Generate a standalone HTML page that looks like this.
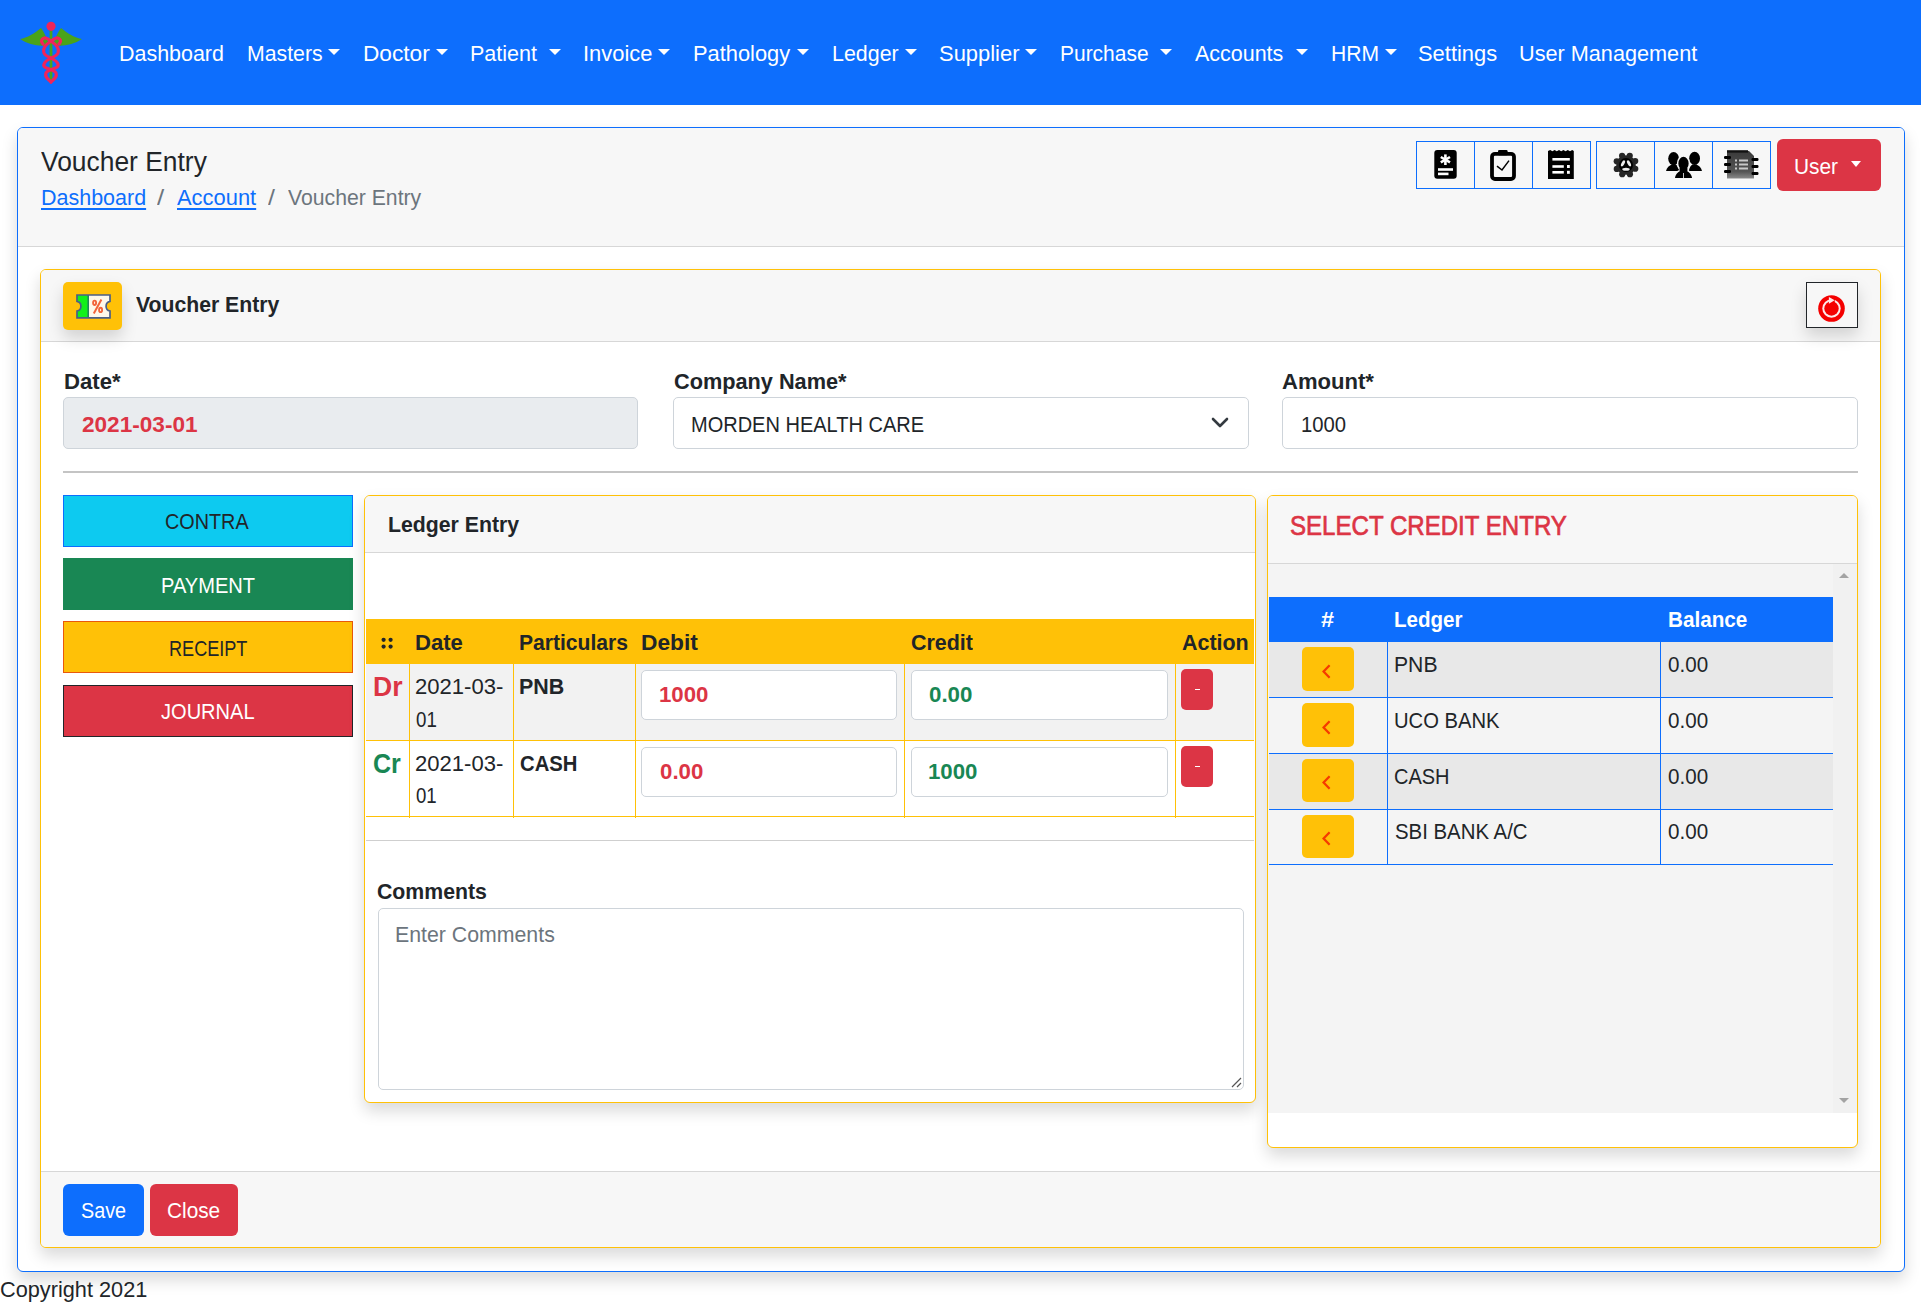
<!DOCTYPE html>
<html><head><meta charset="utf-8"><style>
html,body{margin:0;padding:0;background:#fff;width:1921px;height:1304px;overflow:hidden;position:relative;font-family:"Liberation Sans", sans-serif;}
</style></head><body>
<div style="position:absolute;left:0px;top:0px;width:1921px;height:105px;box-sizing:border-box;background:#0d6efd;"></div>
<svg style="position:absolute;left:18px;top:20px" width="66" height="66" viewBox="0 0 66 66">
<path d="M2 19 C9 18 17 13 23 8 C27 13 29 19 31 25 C22 27 11 25 2 19Z" fill="#4aa31a"/>
<path d="M64 19 C57 18 49 13 43 8 C39 13 37 19 35 25 C44 27 55 25 64 19Z" fill="#4aa31a"/>
<rect x="31.6" y="8" width="2.8" height="54" fill="#4aa31a"/>
<circle cx="33" cy="6.3" r="4.6" fill="#f0245a"/>
<g fill="none" stroke="#f0245a" stroke-width="3.2" stroke-linecap="round">
<path d="M25 24 C21 20 26 16 30 19 C36 23 42 27 40 33 C38 38 28 38 26 44 C24 49 36 49 38 53 C40 58 34 60 33 62"/>
<path d="M41 24 C45 20 40 16 36 19 C30 23 24 27 26 33 C28 38 38 38 40 44 C42 49 30 49 28 53 C26 58 32 60 33 62"/>
</g>
</svg>
<div style="position:absolute;left:328.2px;top:48.7px;width:0;height:0;border-left:6.30px solid transparent;border-right:6.30px solid transparent;border-top:6.4px solid #fff"></div>
<div style="position:absolute;left:435.5px;top:48.7px;width:0;height:0;border-left:6.25px solid transparent;border-right:6.25px solid transparent;border-top:6.4px solid #fff"></div>
<div style="position:absolute;left:548.5px;top:48.7px;width:0;height:0;border-left:6.25px solid transparent;border-right:6.25px solid transparent;border-top:6.4px solid #fff"></div>
<div style="position:absolute;left:658px;top:48.7px;width:0;height:0;border-left:6.25px solid transparent;border-right:6.25px solid transparent;border-top:6.4px solid #fff"></div>
<div style="position:absolute;left:797px;top:48.7px;width:0;height:0;border-left:6.50px solid transparent;border-right:6.50px solid transparent;border-top:6.4px solid #fff"></div>
<div style="position:absolute;left:905px;top:48.7px;width:0;height:0;border-left:6.25px solid transparent;border-right:6.25px solid transparent;border-top:6.4px solid #fff"></div>
<div style="position:absolute;left:1025px;top:48.7px;width:0;height:0;border-left:6.50px solid transparent;border-right:6.50px solid transparent;border-top:6.4px solid #fff"></div>
<div style="position:absolute;left:1159.7px;top:48.7px;width:0;height:0;border-left:6.15px solid transparent;border-right:6.15px solid transparent;border-top:6.4px solid #fff"></div>
<div style="position:absolute;left:1295.6px;top:48.7px;width:0;height:0;border-left:6.25px solid transparent;border-right:6.25px solid transparent;border-top:6.4px solid #fff"></div>
<div style="position:absolute;left:1385px;top:48.7px;width:0;height:0;border-left:6.25px solid transparent;border-right:6.25px solid transparent;border-top:6.4px solid #fff"></div>
<div style="position:absolute;left:17px;top:127px;width:1888px;height:1145px;box-sizing:border-box;border:1px solid #0d6efd;border-radius:6px;background:#fff;overflow:hidden;box-shadow:0 8px 16px rgba(0,0,0,.15);"><div style="position:absolute;left:0;top:0;right:0;height:118px;background:#f7f7f7;border-bottom:1px solid rgba(0,0,0,.13)"></div></div>
<div style="position:absolute;left:1416px;top:141px;width:174.5px;height:47.5px;box-sizing:border-box;border:1px solid #0d6efd;"><div style="position:absolute;left:56.80px;top:0;width:1px;height:100%;background:#0d6efd"></div><div style="position:absolute;left:114.70px;top:0;width:1px;height:100%;background:#0d6efd"></div></div>
<div style="position:absolute;left:1596px;top:141px;width:174.5px;height:47.5px;box-sizing:border-box;border:1px solid #0d6efd;"><div style="position:absolute;left:57.30px;top:0;width:1px;height:100%;background:#0d6efd"></div><div style="position:absolute;left:115.40px;top:0;width:1px;height:100%;background:#0d6efd"></div></div>
<div style="position:absolute;left:1777px;top:139px;width:103.5px;height:51.5px;box-sizing:border-box;background:#dc3545;border-radius:6px;"></div>
<div style="position:absolute;left:1850.8px;top:161.2px;width:0;height:0;border-left:5.8px solid transparent;border-right:5.8px solid transparent;border-top:6.2px solid #fff"></div>
<div style="position:absolute;left:40px;top:269px;width:1841px;height:979px;box-sizing:border-box;border:1px solid #ffc107;border-radius:6px;background:#fff;overflow:hidden;box-shadow:0 8px 16px rgba(0,0,0,.15);"><div style="position:absolute;left:0;top:0;right:0;height:71px;background:#f7f7f7;border-bottom:1px solid rgba(0,0,0,.13)"></div><div style="position:absolute;left:0;bottom:0;right:0;height:75px;background:#f7f7f7;border-top:1px solid rgba(0,0,0,.13)"></div></div>
<div style="position:absolute;left:63px;top:282px;width:59px;height:48px;box-sizing:border-box;background:#ffc107;border-radius:5px;box-shadow:0 8px 16px rgba(0,0,0,.15);"></div>
<div style="position:absolute;left:1806.4px;top:281.9px;width:51.59999999999991px;height:46.60000000000002px;box-sizing:border-box;border:1.5px solid #212529;background:#f7f7f7;box-shadow:0 8px 16px rgba(0,0,0,.15);"></div>
<div style="position:absolute;left:63.3px;top:397.2px;width:575.2px;height:51.60000000000002px;box-sizing:border-box;background:#e9ecef;border:1px solid #ced4da;border-radius:5px;"></div>
<div style="position:absolute;left:672.5px;top:397.2px;width:576.0px;height:51.60000000000002px;box-sizing:border-box;background:#fff;border:1px solid #ced4da;border-radius:5px;"></div>
<div style="position:absolute;left:1282.3px;top:397.2px;width:575.5px;height:51.60000000000002px;box-sizing:border-box;background:#fff;border:1px solid #ced4da;border-radius:5px;"></div>
<svg style="position:absolute;left:1210px;top:414px" width="20" height="16" viewBox="0 0 20 16"><path d="M3 5 L10 12 L17 5" fill="none" stroke="#343a40" stroke-width="2.6" stroke-linecap="round" stroke-linejoin="round"/></svg>
<div style="position:absolute;left:63px;top:471px;width:1795px;height:2px;box-sizing:border-box;background:#c4c4c4;"></div>
<div style="position:absolute;left:63.2px;top:495.2px;width:289.7px;height:51.599999999999966px;box-sizing:border-box;background:#0dcaf0;border:1px solid #0d6efd;"></div>
<div style="position:absolute;left:63.2px;top:558.4px;width:289.7px;height:51.39999999999998px;box-sizing:border-box;background:#198754;border:1px solid #198754;"></div>
<div style="position:absolute;left:63.2px;top:621.3px;width:289.7px;height:52.200000000000045px;box-sizing:border-box;background:#ffc107;border:1px solid #e8590c;"></div>
<div style="position:absolute;left:63.2px;top:685.1px;width:289.7px;height:51.799999999999955px;box-sizing:border-box;background:#dc3545;border:1px solid #212529;"></div>
<div style="position:absolute;left:364.3px;top:495.3px;width:891.3px;height:608.2px;box-sizing:border-box;border:1px solid #ffc107;border-radius:6px;background:#fff;overflow:hidden;box-shadow:0 8px 16px rgba(0,0,0,.15);"><div style="position:absolute;left:0;top:0;right:0;height:56px;background:#f7f7f7;border-bottom:1px solid rgba(0,0,0,.13)"></div></div>
<div style="position:absolute;left:365.5px;top:619.1px;width:888.9000000000001px;height:44.89999999999998px;box-sizing:border-box;background:#ffc107;"></div>
<div style="position:absolute;left:365.5px;top:664px;width:888.9000000000001px;height:76.5px;box-sizing:border-box;background:#f2f2f2;"></div>
<div style="position:absolute;left:409px;top:664px;width:1px;height:153.5px;box-sizing:border-box;background:#ffc107;"></div>
<div style="position:absolute;left:513px;top:664px;width:1px;height:153.5px;box-sizing:border-box;background:#ffc107;"></div>
<div style="position:absolute;left:635px;top:664px;width:1px;height:153.5px;box-sizing:border-box;background:#ffc107;"></div>
<div style="position:absolute;left:904px;top:664px;width:1px;height:153.5px;box-sizing:border-box;background:#ffc107;"></div>
<div style="position:absolute;left:1175px;top:664px;width:1px;height:153.5px;box-sizing:border-box;background:#ffc107;"></div>
<div style="position:absolute;left:365.5px;top:740px;width:888.9000000000001px;height:1px;box-sizing:border-box;background:#ffc107;"></div>
<div style="position:absolute;left:365.5px;top:816px;width:888.9000000000001px;height:1px;box-sizing:border-box;background:#ffc107;"></div>
<div style="position:absolute;left:366px;top:839.5px;width:888.4000000000001px;height:1.2999999999999545px;box-sizing:border-box;background:#cfcfcf;"></div>
<svg style="position:absolute;left:381px;top:637px" width="13" height="13" viewBox="0 0 13 13"><g fill="#212529"><circle cx="2.6" cy="2.8" r="2.1"/><circle cx="9.6" cy="2.8" r="2.1"/><circle cx="2.6" cy="9.6" r="2.1"/><circle cx="9.6" cy="9.6" r="2.1"/></g></svg>
<div style="position:absolute;left:641.4px;top:669.9px;width:255.80000000000007px;height:50.5px;box-sizing:border-box;background:#fff;border:1px solid #ced4da;border-radius:5px;"></div>
<div style="position:absolute;left:910.8px;top:669.9px;width:257.70000000000005px;height:50.5px;box-sizing:border-box;background:#fff;border:1px solid #ced4da;border-radius:5px;"></div>
<div style="position:absolute;left:1181.3px;top:669.3px;width:31.90000000000009px;height:40.700000000000045px;box-sizing:border-box;background:#dc3545;border-radius:5px;"></div>
<div style="position:absolute;left:1194.5px;top:689px;width:5.5px;height:1.2000000000000455px;box-sizing:border-box;background:#fff;"></div>
<div style="position:absolute;left:641.4px;top:746.7px;width:255.80000000000007px;height:50.799999999999955px;box-sizing:border-box;background:#fff;border:1px solid #ced4da;border-radius:5px;"></div>
<div style="position:absolute;left:910.8px;top:746.7px;width:257.70000000000005px;height:50.799999999999955px;box-sizing:border-box;background:#fff;border:1px solid #ced4da;border-radius:5px;"></div>
<div style="position:absolute;left:1181.3px;top:746.3px;width:31.90000000000009px;height:40.5px;box-sizing:border-box;background:#dc3545;border-radius:5px;"></div>
<div style="position:absolute;left:1194.5px;top:766px;width:5.5px;height:1.2000000000000455px;box-sizing:border-box;background:#fff;"></div>
<div style="position:absolute;left:377.7px;top:907.6px;width:866.3px;height:182.89999999999998px;box-sizing:border-box;background:#fff;border:1px solid #ced4da;border-radius:5px;"></div>
<svg style="position:absolute;left:1230px;top:1076px" width="12" height="12" viewBox="0 0 12 12"><path d="M11 2 L2 11 M11 7 L7 11" stroke="#555" stroke-width="1.2"/></svg>
<div style="position:absolute;left:1267.3px;top:495.3px;width:590.5px;height:653.2px;box-sizing:border-box;border:1px solid #ffc107;border-radius:6px;background:#fff;overflow:hidden;box-shadow:0 8px 16px rgba(0,0,0,.15);"><div style="position:absolute;left:0;top:0;right:0;height:67px;background:#f7f7f7;border-bottom:1px solid rgba(0,0,0,.13)"></div><div style="position:absolute;left:0;top:68px;right:0;height:549px;background:#f4f4f4"></div><div style="position:absolute;left:565px;top:68px;width:24px;height:549px;background:#f1f1f1"></div></div>
<div style="position:absolute;left:1839px;top:573px;width:0;height:0;border-left:5.4px solid transparent;border-right:5.4px solid transparent;border-bottom:5.8px solid #a3a3a3"></div>
<div style="position:absolute;left:1839px;top:1098px;width:0;height:0;border-left:5.4px solid transparent;border-right:5.4px solid transparent;border-top:5.8px solid #a3a3a3"></div>
<div style="position:absolute;left:1268.5px;top:597.2px;width:564.5px;height:44.59999999999991px;box-sizing:border-box;background:#0d6efd;"></div>
<div style="position:absolute;left:1268.5px;top:641.8px;width:564.5px;height:55.799999999999955px;box-sizing:border-box;background:#e8e8e8;"></div>
<div style="position:absolute;left:1268.5px;top:753.4px;width:564.5px;height:55.799999999999955px;box-sizing:border-box;background:#e8e8e8;"></div>
<div style="position:absolute;left:1268.5px;top:697px;width:564.5px;height:1px;box-sizing:border-box;background:#0d6efd;"></div>
<div style="position:absolute;left:1302.3px;top:647.0999999999999px;width:51.700000000000045px;height:43.700000000000045px;box-sizing:border-box;background:#ffc107;border-radius:5px;"></div>
<svg style="position:absolute;left:1320px;top:662.8px" width="13" height="17" viewBox="0 0 13 17"><path d="M9.6 2.2 L3.6 8.5 L9.6 14.8" fill="none" stroke="#f53b00" stroke-width="2.3"/></svg>
<div style="position:absolute;left:1268.5px;top:753px;width:564.5px;height:1px;box-sizing:border-box;background:#0d6efd;"></div>
<div style="position:absolute;left:1302.3px;top:702.9px;width:51.700000000000045px;height:43.700000000000045px;box-sizing:border-box;background:#ffc107;border-radius:5px;"></div>
<svg style="position:absolute;left:1320px;top:718.6px" width="13" height="17" viewBox="0 0 13 17"><path d="M9.6 2.2 L3.6 8.5 L9.6 14.8" fill="none" stroke="#f53b00" stroke-width="2.3"/></svg>
<div style="position:absolute;left:1268.5px;top:809px;width:564.5px;height:1px;box-sizing:border-box;background:#0d6efd;"></div>
<div style="position:absolute;left:1302.3px;top:758.6999999999999px;width:51.700000000000045px;height:43.700000000000045px;box-sizing:border-box;background:#ffc107;border-radius:5px;"></div>
<svg style="position:absolute;left:1320px;top:774.4px" width="13" height="17" viewBox="0 0 13 17"><path d="M9.6 2.2 L3.6 8.5 L9.6 14.8" fill="none" stroke="#f53b00" stroke-width="2.3"/></svg>
<div style="position:absolute;left:1268.5px;top:864px;width:564.5px;height:1px;box-sizing:border-box;background:#0d6efd;"></div>
<div style="position:absolute;left:1302.3px;top:814.5px;width:51.700000000000045px;height:43.700000000000045px;box-sizing:border-box;background:#ffc107;border-radius:5px;"></div>
<svg style="position:absolute;left:1320px;top:830.2px" width="13" height="17" viewBox="0 0 13 17"><path d="M9.6 2.2 L3.6 8.5 L9.6 14.8" fill="none" stroke="#f53b00" stroke-width="2.3"/></svg>
<div style="position:absolute;left:1387px;top:641.8px;width:1px;height:223.20000000000005px;box-sizing:border-box;background:#0d6efd;"></div>
<div style="position:absolute;left:1660px;top:641.8px;width:1px;height:223.20000000000005px;box-sizing:border-box;background:#0d6efd;"></div>
<div style="position:absolute;left:62.9px;top:1184.1px;width:80.9px;height:51.80000000000018px;box-sizing:border-box;background:#0d6efd;border-radius:6px;"></div>
<div style="position:absolute;left:150.2px;top:1184.1px;width:87.70000000000002px;height:51.80000000000018px;box-sizing:border-box;background:#dc3545;border-radius:6px;"></div>
<svg style="position:absolute;left:1433.5px;top:150.3px" width="23" height="29" viewBox="0 0 23 29">
<rect x="0.3" y="0" width="22.4" height="28.8" rx="3" fill="#000"/>
<g stroke="#fff" stroke-width="2.6" stroke-linecap="butt"><path d="M11.4 4.4 V15"/><path d="M6.8 7 L16 12.4"/><path d="M6.8 12.4 L16 7"/></g>
<rect x="4" y="18.2" width="15" height="2.6" fill="#fff"/><rect x="4" y="22.6" width="10.5" height="2.6" fill="#fff"/>
</svg>
<svg style="position:absolute;left:1490px;top:149.5px" width="26" height="31" viewBox="0 0 26 31">
<rect x="2" y="3.8" width="22" height="25.2" rx="3" fill="none" stroke="#000" stroke-width="3.8"/>
<rect x="8" y="0" width="9.6" height="5.2" rx="1.2" fill="#000"/>
<path d="M7 16.2 L12 20 L19 10.6" fill="none" stroke="#000" stroke-width="1.5"/>
</svg>
<svg style="position:absolute;left:1548px;top:150px" width="26" height="29" viewBox="0 0 26 29">
<path d="M0 1 L2.2 0 L4.4 1.2 L6.6 0 L8.8 1.2 L11 0 L13.2 1.2 L15.4 0 L17.6 1.2 L19.8 0 L22 1.2 L24.2 0 L25.8 1 V29 H0 Z" fill="#000"/>
<rect x="4.4" y="8" width="17.4" height="2.6" fill="#fff"/>
<rect x="4.4" y="15.2" width="11.4" height="2.6" fill="#fff"/><rect x="19" y="15" width="2.8" height="3" fill="#fff"/>
<rect x="4.4" y="21" width="11.4" height="2.6" fill="#fff"/><rect x="19" y="20.8" width="2.8" height="3" fill="#fff"/>
</svg>
<svg style="position:absolute;left:1612px;top:150.7px" width="28" height="28" viewBox="-14 -14 28 28">
<g fill="#262626"><circle r="9.8"/><circle cx="9.27" cy="3.75" r="3.1"/><circle cx="3.91" cy="9.21" r="3.1"/><circle cx="-3.75" cy="9.27" r="3.1"/><circle cx="-9.21" cy="3.91" r="3.1"/><circle cx="-9.27" cy="-3.75" r="3.1"/><circle cx="-3.91" cy="-9.21" r="3.1"/><circle cx="3.75" cy="-9.27" r="3.1"/><circle cx="9.21" cy="-3.91" r="3.1"/></g>
<circle r="7" fill="#000"/>
<ellipse cx="-3" cy="-1.6" rx="1.5" ry="3.3" transform="rotate(28 -3 -1.6)" fill="#ececec"/>
<ellipse cx="3" cy="-1.6" rx="1.5" ry="3.3" transform="rotate(-28 3 -1.6)" fill="#ececec"/>
<ellipse cx="0" cy="4.3" rx="3.7" ry="1.5" fill="#ececec"/>
</svg>
<svg style="position:absolute;left:1662px;top:146px" width="44" height="36" viewBox="0 0 44 36">
<g fill="#000">
<ellipse cx="11.6" cy="12.6" rx="5.4" ry="6.6"/><path d="M4 25 C4.6 21.5 7.5 19.2 9.8 18.4 L13.6 18.4 C15.6 19.4 16.8 22 17.2 25 Z"/>
<ellipse cx="32.6" cy="12.4" rx="5.4" ry="6.6"/><path d="M26.8 25 C27.2 22 28.6 19.4 30.6 18.4 L34.4 18.4 C36.7 19.2 39.4 21.5 40 25 Z"/>
</g>
<g fill="#000" stroke="#f7f7f7" stroke-width="1.5">
<path d="M12 32.8 C12.6 28 15.6 25 18.6 24.2 L24.4 24.2 C27.4 25 30.4 28 31 32.8 Z"/>
<ellipse cx="21.5" cy="17.4" rx="5.9" ry="7.4"/>
</g>
<rect x="17.6" y="22" width="7.8" height="4" fill="#000"/>
<rect x="21.1" y="27" width="0.8" height="6" fill="#f7f7f7"/>
</svg>
<svg style="position:absolute;left:1724px;top:149.5px" width="35" height="29" viewBox="0 0 35 29">
<defs><linearGradient id="nb" x1="0" y1="0" x2="0" y2="1"><stop offset="0" stop-color="#3a3a3a"/><stop offset="0.75" stop-color="#555"/><stop offset="1" stop-color="#8a8a8a"/></linearGradient></defs>
<path d="M3 1 H25 L30 6 V28.5 H3 Z" fill="url(#nb)"/>
<rect x="3" y="0.2" width="21" height="2.4" fill="#111"/>
<g fill="#000"><rect x="0" y="6" width="7" height="3" rx="1.2"/><rect x="0" y="13" width="7" height="3" rx="1.2"/><rect x="0" y="20" width="7" height="3" rx="1.2"/>
<rect x="27.5" y="8" width="7" height="3" rx="1.2"/><rect x="27.5" y="15" width="7" height="3" rx="1.2"/><rect x="27.5" y="22" width="7" height="3" rx="1.2"/></g>
<g fill="#c8c8c8"><rect x="11" y="9.5" width="2" height="2"/><rect x="15" y="9.5" width="9" height="2"/><rect x="11" y="13.5" width="2" height="2"/><rect x="15" y="13.5" width="9" height="2"/><rect x="11" y="17.5" width="2" height="2"/><rect x="15" y="17.5" width="9" height="2"/></g>
</svg>
<svg style="position:absolute;left:75.5px;top:293.5px" width="35" height="25" viewBox="0 0 35 25">
<defs><clipPath id="tk"><path d="M1 1 H34 V7.4 A4.9 4.9 0 0 0 34 17 V23.8 H1 V17 A4.9 4.9 0 0 0 1 7.4 Z"/></clipPath></defs>
<g clip-path="url(#tk)"><rect width="35" height="25" fill="#fdf8ea"/><rect width="13" height="25" fill="#12f01a"/><rect x="11.4" width="1.6" height="25" fill="#1e8a5a"/></g>
<path d="M1 1 H34 V7.4 A4.9 4.9 0 0 0 34 17 V23.8 H1 V17 A4.9 4.9 0 0 0 1 7.4 Z" fill="none" stroke="#4b5f86" stroke-width="1.7"/>
<g fill="none" stroke="#f2643a" stroke-width="1.9"><ellipse cx="18.6" cy="8.8" rx="1.5" ry="2.2"/><ellipse cx="24.6" cy="15.9" rx="1.5" ry="2.2"/></g>
<path d="M25.4 5.6 L17.8 19.6" stroke="#f2643a" stroke-width="2"/>
</svg>
<svg style="position:absolute;left:1817px;top:293.5px" width="29" height="29" viewBox="-14.5 -14.5 29 29">
<circle r="13.3" fill="#f40000"/>
<circle r="9.2" fill="#fde8e8"/>
<circle r="7.2" fill="#f40000"/>
<path d="M3.6 -9.6 A9.6 9.6 0 0 0 -2.5 -9.3 L-1 -5 A5 5 0 0 1 3 -5.5 Z" fill="#f40000"/>
<path d="M-2.6 -11.6 L3.2 -8.2 L-2.6 -4.8 Z" fill="#fde8e8"/>
</svg>
<div style="position:absolute;left:118.74px;top:42.73px;font-size:22.4px;line-height:22.4px;font-weight:400;color:#fff;white-space:nowrap;transform-origin:0 0;transform:scaleX(0.9576);">Dashboard</div>
<div style="position:absolute;left:247.05px;top:42.73px;font-size:22.4px;line-height:22.4px;font-weight:400;color:#fff;white-space:nowrap;transform-origin:0 0;transform:scaleX(0.9499);">Masters</div>
<div style="position:absolute;left:362.69px;top:42.73px;font-size:22.4px;line-height:22.4px;font-weight:400;color:#fff;white-space:nowrap;transform-origin:0 0;transform:scaleX(1.0124);">Doctor</div>
<div style="position:absolute;left:469.84px;top:42.73px;font-size:22.4px;line-height:22.4px;font-weight:400;color:#fff;white-space:nowrap;transform-origin:0 0;transform:scaleX(0.9599);">Patient</div>
<div style="position:absolute;left:583.04px;top:42.73px;font-size:22.4px;line-height:22.4px;font-weight:400;color:#fff;white-space:nowrap;transform-origin:0 0;transform:scaleX(0.9782);">Invoice</div>
<div style="position:absolute;left:693.02px;top:42.73px;font-size:22.4px;line-height:22.4px;font-weight:400;color:#fff;white-space:nowrap;transform-origin:0 0;transform:scaleX(0.9759);">Pathology</div>
<div style="position:absolute;left:831.54px;top:42.73px;font-size:22.4px;line-height:22.4px;font-weight:400;color:#fff;white-space:nowrap;transform-origin:0 0;transform:scaleX(0.9565);">Ledger</div>
<div style="position:absolute;left:939.02px;top:42.73px;font-size:22.4px;line-height:22.4px;font-weight:400;color:#fff;white-space:nowrap;transform-origin:0 0;transform:scaleX(0.9793);">Supplier</div>
<div style="position:absolute;left:1059.66px;top:42.73px;font-size:22.4px;line-height:22.4px;font-weight:400;color:#fff;white-space:nowrap;transform-origin:0 0;transform:scaleX(0.9362);">Purchase</div>
<div style="position:absolute;left:1195.00px;top:42.73px;font-size:22.4px;line-height:22.4px;font-weight:400;color:#fff;white-space:nowrap;transform-origin:0 0;transform:scaleX(0.9586);">Accounts</div>
<div style="position:absolute;left:1330.96px;top:42.73px;font-size:22.4px;line-height:22.4px;font-weight:400;color:#fff;white-space:nowrap;transform-origin:0 0;transform:scaleX(0.9433);">HRM</div>
<div style="position:absolute;left:1418.02px;top:42.73px;font-size:22.4px;line-height:22.4px;font-weight:400;color:#fff;white-space:nowrap;transform-origin:0 0;transform:scaleX(0.9786);">Settings</div>
<div style="position:absolute;left:1519.03px;top:42.73px;font-size:22.4px;line-height:22.4px;font-weight:400;color:#fff;white-space:nowrap;transform-origin:0 0;transform:scaleX(0.9676);">User Management</div>
<div style="position:absolute;left:40.90px;top:147.25px;font-size:28.4px;line-height:28.4px;font-weight:400;color:#212529;white-space:nowrap;transform-origin:0 0;transform:scaleX(0.9300);">Voucher Entry</div>
<div style="position:absolute;left:40.51px;top:186.64px;font-size:21.8px;line-height:21.8px;font-weight:400;color:#0d6efd;white-space:nowrap;transform-origin:0 0;transform:scaleX(0.9856);text-decoration:underline;text-decoration-thickness:1.8px;text-underline-offset:3.2px;">Dashboard</div>
<div style="position:absolute;left:157.00px;top:186.64px;font-size:21.8px;line-height:21.8px;font-weight:400;color:#6c757d;white-space:nowrap;transform-origin:0 0;transform:scaleX(1.1857);">/</div>
<div style="position:absolute;left:176.80px;top:186.64px;font-size:21.8px;line-height:21.8px;font-weight:400;color:#0d6efd;white-space:nowrap;transform-origin:0 0;transform:scaleX(1.0051);text-decoration:underline;text-decoration-thickness:1.8px;text-underline-offset:3.2px;">Account</div>
<div style="position:absolute;left:268.00px;top:186.64px;font-size:21.8px;line-height:21.8px;font-weight:400;color:#6c757d;white-space:nowrap;transform-origin:0 0;transform:scaleX(1.1429);">/</div>
<div style="position:absolute;left:287.60px;top:186.64px;font-size:21.8px;line-height:21.8px;font-weight:400;color:#6c757d;white-space:nowrap;transform-origin:0 0;transform:scaleX(0.9729);">Voucher Entry</div>
<div style="position:absolute;left:1794.25px;top:155.67px;font-size:22px;line-height:22px;font-weight:400;color:#fff;white-space:nowrap;transform-origin:0 0;transform:scaleX(0.9485);">User</div>
<div style="position:absolute;left:135.80px;top:293.96px;font-size:22.6px;line-height:22.6px;font-weight:700;color:#212529;white-space:nowrap;transform-origin:0 0;transform:scaleX(0.9381);">Voucher Entry</div>
<div style="position:absolute;left:63.68px;top:371.04px;font-size:21.8px;line-height:21.8px;font-weight:700;color:#212529;white-space:nowrap;transform-origin:0 0;transform:scaleX(1.0155);">Date*</div>
<div style="position:absolute;left:673.70px;top:371.24px;font-size:21.8px;line-height:21.8px;font-weight:700;color:#212529;white-space:nowrap;transform-origin:0 0;transform:scaleX(0.9958);">Company Name*</div>
<div style="position:absolute;left:1282.30px;top:371.34px;font-size:21.8px;line-height:21.8px;font-weight:700;color:#212529;white-space:nowrap;transform-origin:0 0;transform:scaleX(1.0118);">Amount*</div>
<div style="position:absolute;left:81.70px;top:414.17px;font-size:22px;line-height:22px;font-weight:700;color:#dc3545;white-space:nowrap;transform-origin:0 0;transform:scaleX(1.0267);">2021-03-01</div>
<div style="position:absolute;left:691.19px;top:414.07px;font-size:22px;line-height:22px;font-weight:400;color:#212529;white-space:nowrap;transform-origin:0 0;transform:scaleX(0.9092);">MORDEN HEALTH CARE</div>
<div style="position:absolute;left:1301.08px;top:413.57px;font-size:22px;line-height:22px;font-weight:400;color:#212529;white-space:nowrap;transform-origin:0 0;transform:scaleX(0.9223);">1000</div>
<div style="position:absolute;left:165.39px;top:511.14px;font-size:21.8px;line-height:21.8px;font-weight:400;color:#212529;white-space:nowrap;transform-origin:0 0;transform:scaleX(0.9083);">CONTRA</div>
<div style="position:absolute;left:161.08px;top:574.94px;font-size:21.8px;line-height:21.8px;font-weight:400;color:#fff;white-space:nowrap;transform-origin:0 0;transform:scaleX(0.9205);">PAYMENT</div>
<div style="position:absolute;left:169.17px;top:638.24px;font-size:21.8px;line-height:21.8px;font-weight:400;color:#212529;white-space:nowrap;transform-origin:0 0;transform:scaleX(0.8298);">RECEIPT</div>
<div style="position:absolute;left:161.30px;top:700.54px;font-size:21.8px;line-height:21.8px;font-weight:400;color:#fff;white-space:nowrap;transform-origin:0 0;transform:scaleX(0.9201);">JOURNAL</div>
<div style="position:absolute;left:388.02px;top:513.94px;font-size:21.8px;line-height:21.8px;font-weight:700;color:#212529;white-space:nowrap;transform-origin:0 0;transform:scaleX(0.9751);">Ledger Entry</div>
<div style="position:absolute;left:415.29px;top:631.74px;font-size:21.8px;line-height:21.8px;font-weight:700;color:#212529;white-space:nowrap;transform-origin:0 0;transform:scaleX(1.0125);">Date</div>
<div style="position:absolute;left:519.13px;top:631.74px;font-size:21.8px;line-height:21.8px;font-weight:700;color:#212529;white-space:nowrap;transform-origin:0 0;transform:scaleX(0.9672);">Particulars</div>
<div style="position:absolute;left:641.46px;top:631.74px;font-size:21.8px;line-height:21.8px;font-weight:700;color:#212529;white-space:nowrap;transform-origin:0 0;transform:scaleX(1.0426);">Debit</div>
<div style="position:absolute;left:911.30px;top:632.04px;font-size:21.8px;line-height:21.8px;font-weight:700;color:#212529;white-space:nowrap;transform-origin:0 0;transform:scaleX(0.9838);">Credit</div>
<div style="position:absolute;left:1182.20px;top:632.04px;font-size:21.8px;line-height:21.8px;font-weight:700;color:#212529;white-space:nowrap;transform-origin:0 0;transform:scaleX(0.9836);">Action</div>
<div style="position:absolute;left:372.72px;top:674.34px;font-size:27px;line-height:27px;font-weight:700;color:#dc3545;white-space:nowrap;transform-origin:0 0;transform:scaleX(0.9831);">Dr</div>
<div style="position:absolute;left:414.79px;top:676.04px;font-size:21.8px;line-height:21.8px;font-weight:400;color:#212529;white-space:nowrap;transform-origin:0 0;transform:scaleX(1.0129);">2021-03-</div>
<div style="position:absolute;left:415.80px;top:708.74px;font-size:21.8px;line-height:21.8px;font-weight:400;color:#212529;white-space:nowrap;transform-origin:0 0;transform:scaleX(0.8581);">01</div>
<div style="position:absolute;left:519.12px;top:676.14px;font-size:21.8px;line-height:21.8px;font-weight:700;color:#212529;white-space:nowrap;transform-origin:0 0;transform:scaleX(0.9824);">PNB</div>
<div style="position:absolute;left:659.39px;top:684.47px;font-size:22px;line-height:22px;font-weight:700;color:#dc3545;white-space:nowrap;transform-origin:0 0;transform:scaleX(1.0104);">1000</div>
<div style="position:absolute;left:928.80px;top:684.27px;font-size:22px;line-height:22px;font-weight:700;color:#198754;white-space:nowrap;transform-origin:0 0;transform:scaleX(1.0145);">0.00</div>
<div style="position:absolute;left:373.07px;top:751.04px;font-size:27px;line-height:27px;font-weight:700;color:#198754;white-space:nowrap;transform-origin:0 0;transform:scaleX(0.9289);">Cr</div>
<div style="position:absolute;left:414.89px;top:752.64px;font-size:21.8px;line-height:21.8px;font-weight:400;color:#212529;white-space:nowrap;transform-origin:0 0;transform:scaleX(1.0117);">2021-03-</div>
<div style="position:absolute;left:415.90px;top:785.44px;font-size:21.8px;line-height:21.8px;font-weight:400;color:#212529;white-space:nowrap;transform-origin:0 0;transform:scaleX(0.8540);">01</div>
<div style="position:absolute;left:519.60px;top:753.04px;font-size:21.8px;line-height:21.8px;font-weight:700;color:#212529;white-space:nowrap;transform-origin:0 0;transform:scaleX(0.9292);">CASH</div>
<div style="position:absolute;left:659.90px;top:761.37px;font-size:22px;line-height:22px;font-weight:700;color:#dc3545;white-space:nowrap;transform-origin:0 0;transform:scaleX(1.0121);">0.00</div>
<div style="position:absolute;left:927.99px;top:761.37px;font-size:22px;line-height:22px;font-weight:700;color:#198754;white-space:nowrap;transform-origin:0 0;transform:scaleX(1.0104);">1000</div>
<div style="position:absolute;left:377.20px;top:880.89px;font-size:21.8px;line-height:21.8px;font-weight:700;color:#212529;white-space:nowrap;transform-origin:0 0;transform:scaleX(0.9759);">Comments</div>
<div style="position:absolute;left:394.92px;top:924.14px;font-size:21.8px;line-height:21.8px;font-weight:400;color:#6c757d;white-space:nowrap;transform-origin:0 0;transform:scaleX(0.9771);">Enter Comments</div>
<div style="position:absolute;left:1289.94px;top:512.29px;font-size:28px;line-height:28px;font-weight:400;color:#dc3545;white-space:nowrap;transform-origin:0 0;transform:scaleX(0.8598);-webkit-text-stroke:0.7px #dc3545;">SELECT CREDIT ENTRY</div>
<div style="position:absolute;left:1321.30px;top:609.04px;font-size:21.8px;line-height:21.8px;font-weight:700;color:#fff;white-space:nowrap;transform-origin:0 0;transform:scaleX(1.0750);">#</div>
<div style="position:absolute;left:1394.06px;top:609.04px;font-size:21.8px;line-height:21.8px;font-weight:700;color:#fff;white-space:nowrap;transform-origin:0 0;transform:scaleX(0.9420);">Ledger</div>
<div style="position:absolute;left:1667.75px;top:609.04px;font-size:21.8px;line-height:21.8px;font-weight:700;color:#fff;white-space:nowrap;transform-origin:0 0;transform:scaleX(0.9493);">Balance</div>
<div style="position:absolute;left:1394.03px;top:653.94px;font-size:21.8px;line-height:21.8px;font-weight:400;color:#212529;white-space:nowrap;transform-origin:0 0;transform:scaleX(0.9704);">PNB</div>
<div style="position:absolute;left:1668.00px;top:653.94px;font-size:21.8px;line-height:21.8px;font-weight:400;color:#212529;white-space:nowrap;transform-origin:0 0;transform:scaleX(0.9456);">0.00</div>
<div style="position:absolute;left:1394.07px;top:709.74px;font-size:21.8px;line-height:21.8px;font-weight:400;color:#212529;white-space:nowrap;transform-origin:0 0;transform:scaleX(0.9267);">UCO BANK</div>
<div style="position:absolute;left:1668.00px;top:709.74px;font-size:21.8px;line-height:21.8px;font-weight:400;color:#212529;white-space:nowrap;transform-origin:0 0;transform:scaleX(0.9456);">0.00</div>
<div style="position:absolute;left:1394.08px;top:765.54px;font-size:21.8px;line-height:21.8px;font-weight:400;color:#212529;white-space:nowrap;transform-origin:0 0;transform:scaleX(0.9167);">CASH</div>
<div style="position:absolute;left:1668.00px;top:765.54px;font-size:21.8px;line-height:21.8px;font-weight:400;color:#212529;white-space:nowrap;transform-origin:0 0;transform:scaleX(0.9456);">0.00</div>
<div style="position:absolute;left:1395.00px;top:821.34px;font-size:21.8px;line-height:21.8px;font-weight:400;color:#212529;white-space:nowrap;transform-origin:0 0;transform:scaleX(0.9353);">SBI BANK A/C</div>
<div style="position:absolute;left:1668.00px;top:821.34px;font-size:21.8px;line-height:21.8px;font-weight:400;color:#212529;white-space:nowrap;transform-origin:0 0;transform:scaleX(0.9456);">0.00</div>
<div style="position:absolute;left:81.00px;top:1199.87px;font-size:22px;line-height:22px;font-weight:400;color:#fff;white-space:nowrap;transform-origin:0 0;transform:scaleX(0.8996);">Save</div>
<div style="position:absolute;left:167.05px;top:1199.87px;font-size:22px;line-height:22px;font-weight:400;color:#fff;white-space:nowrap;transform-origin:0 0;transform:scaleX(0.9453);">Close</div>
<div style="position:absolute;left:-0.30px;top:1278.84px;font-size:21.8px;line-height:21.8px;font-weight:400;color:#212529;white-space:nowrap;transform-origin:0 0;transform:scaleX(0.9965);">Copyright 2021</div>
</body></html>
